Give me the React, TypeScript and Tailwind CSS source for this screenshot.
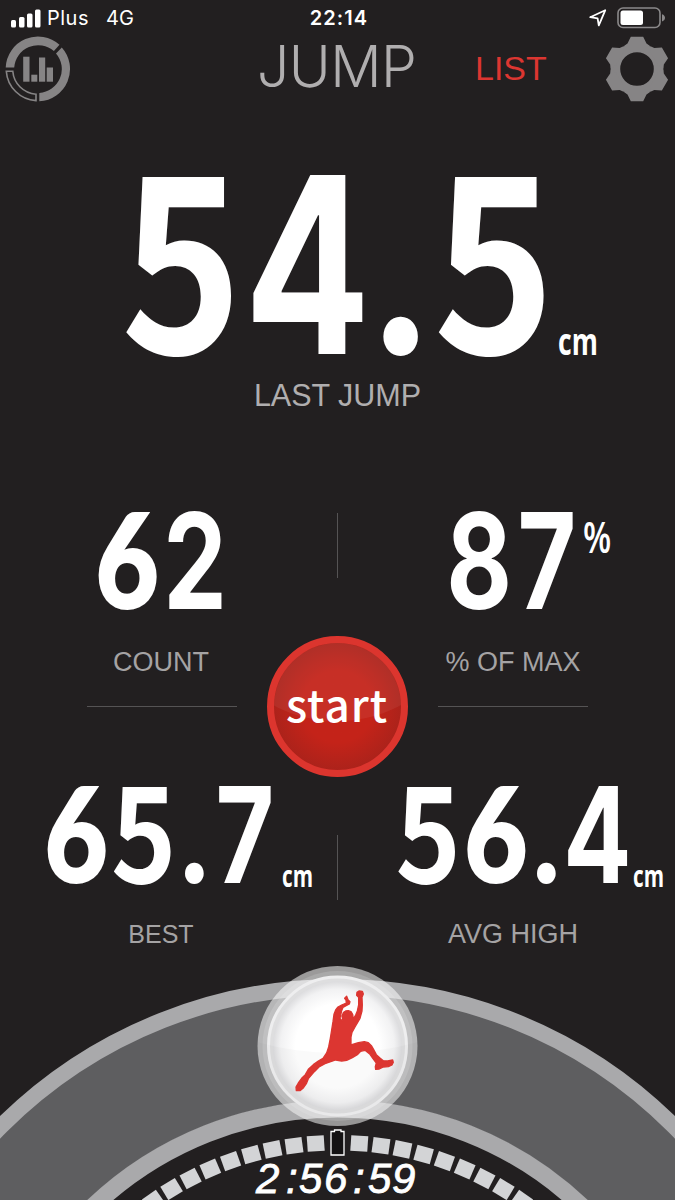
import type { ReactNode } from "react"

const TICKS = [1, 2, 3, 4, 5, 6, 7, 8, 9, 10]
const TEETH = [0, 60, 120, 180, 240, 300]

const StatusBar = () => (
    <div className="flex h-9 shrink-0 items-center font-['Inter',sans-serif] text-xl text-white">
        <div className="flex w-[300px] items-center pl-[11px]">
            <svg width="31" height="19" viewBox="0 0 31 19" fill="#fff">
                <rect x="0" y="11" width="5" height="7.5" rx="1.5" />
                <rect x="8" y="8" width="5.5" height="10.5" rx="1.5" />
                <rect x="16" y="4.5" width="5.5" height="14" rx="1.5" />
                <rect x="24" y="0.5" width="5.5" height="18" rx="1.5" />
            </svg>
            <span className="ml-[5px] tracking-[0.5px]">Plus</span>
            <span className="ml-[17px]">4G</span>
        </div>
        <span className="w-[78px] text-center font-semibold tracking-[1.1px]">22:14</span>
        <div className="flex flex-1 items-center justify-end pr-[9px]">
            <svg width="18" height="18" viewBox="0 0 18 18" fill="none" stroke="#fff" strokeWidth="1.8" strokeLinejoin="round">
                <path d="M1.2 8.2 16.2 1.3 9.8 16.4 8.6 9.3Z" />
            </svg>
            <svg className="ml-[10px]" width="49" height="22" viewBox="0 0 49 22">
                <rect x="1" y="1" width="42" height="19.5" rx="5" fill="none" stroke="#8b898a" strokeWidth="1.6" />
                <rect x="3.5" y="3.5" width="22.5" height="14.5" rx="2.5" fill="#fff" />
                <path d="M45 7.2q3 1 3 3.6t-3 3.6z" fill="#8b898a" />
            </svg>
        </div>
    </div>
)

const StatsIcon = () => (
    <svg width="66" height="66" viewBox="-33 -33 66 66" fill="#868485">
        <path d="M-32.3-1.5A32.3 32.3 0 0 1 21.5-24.2L15.9-17.9A24 24 0 0 0-23.8-1.5Z" />
        <path d="M23.8-21.6A32.3 32.3 0 0 1 1.3 32.2V24A24 24 0 0 0 18-15.6Z" />
        <path d="M-31.7 2.2A31.7 31.7 0 0 0-2 31.6V25.2A25 25 0 0 1-25.2 2.2Z" fill="none" stroke="#868485" strokeWidth="1.6" />
        <rect x="-14.8" y="-12.3" width="6.3" height="25" />
        <rect x="-6.7" y="5.7" width="6" height="7" />
        <rect x="1" y="-11.5" width="6.2" height="24.2" />
        <rect x="8.7" y="-1.5" width="6.3" height="14.2" />
    </svg>
)

const GearIcon = () => (
    <svg width="66" height="66" viewBox="-33 -33 66 66">
        <circle r="21.5" fill="none" stroke="#868485" strokeWidth="9.4" />
        {
            TEETH.map((angle) => (
                <path key={angle} transform={`rotate(${angle})`} d="M-6.2-32.3H6.2L9.5-25.5 13-23 7-20H-7L-13-23-9.5-25.5Z" fill="#868485" />
            ))
        }
    </svg>
)

// Every digit sits in a cell of the same width, some shapes come from another face
const DIGIT_STYLES: Record<string, string> = {
    "5": "w-[0.67em] scale-x-[1.1] font-['Noto_Sans_CJK_JP',sans-serif] font-bold",
    "6": "w-[0.67em] scale-x-[1.09] font-['Lato',sans-serif] font-extrabold",
    ".": "w-[0.33em] scale-x-[1.13] font-['Lato',sans-serif] font-black",
}

const Digits = ({ value, className }: { value: string; className: string }) => (
    <p className={`scale-x-[0.76] font-['Inter',sans-serif] font-bold whitespace-nowrap text-white ${className}`}>
        {
            value.split("").map((char, i) => (
                <span key={i} className={`inline-block text-center leading-[0] ${DIGIT_STYLES[char] ?? "w-[0.67em]"}`}>
                    {char}
                </span>
            ))
        }
    </p>
)

interface ReadingProps {
    value: string;
    label: string;
    labelClass?: string;
    children?: ReactNode
}

const Reading = ({ value, label, labelClass = "mt-4 text-[27px]", children }: ReadingProps) => (
    <div className="relative flex flex-col items-center">
        <Digits value={value} className="text-[133px] leading-[136px]" />
        {children}
        <p className={`leading-8 text-[#a5a3a4] ${labelClass}`}>{label}</p>
    </div>
)

const Unit = ({ className, children }: { className: string; children: ReactNode }) => (
    <span className={`absolute origin-left font-['Open_Sans',sans-serif] leading-none text-white ${className}`}>
        {children}
    </span>
)

const StartButton = () => (
    <button className="absolute top-[156px] left-[267px] size-[141px] overflow-hidden rounded-full border-[7px] border-[#dc352e] bg-radial from-[#c42319] from-40% to-[#96211b]">
        <span className="absolute -top-[60px] -left-[37px] h-[138px] w-[200px] rounded-[50%] bg-white/6" />
        <span className="relative block pr-px pb-2 font-['Noto_Sans_CJK_JP','Lato',sans-serif] text-[44px] leading-none font-medium tracking-[1px] text-white">start</span>
    </button>
)

const Gauge = () => (
    <svg className="shrink-0" width="675" height="240" viewBox="0 960 675 240">
        <defs>
            <radialGradient id="ball">
                <stop offset="0.65" stopColor="#fff" />
                <stop offset="0.88" stopColor="#f2f2f3" />
                <stop offset="1" stopColor="#dcdcde" />
            </radialGradient>
            <clipPath id="lens">
                <circle cx="337.5" cy="1046" r="80" />
            </clipPath>
        </defs>
        <g fill="none">
            <circle cx="337.5" cy="1463" r="416" stroke="#5e5e60" strokeWidth="107" />
            <circle cx="337.5" cy="1463" r="476" stroke="#a9a9ab" strokeWidth="16" />
            <circle cx="337.5" cy="1463" r="354.3" stroke="#a9a9ab" strokeWidth="17.5" />
        </g>
        {
            TICKS.map((tick) => (
                <g key={tick} fill="#d3d4d6">
                    <rect x="329" y="1135" width="17" height="15.5" transform={`rotate(${tick * 3.9} 337.5 1463)`} />
                    <rect x="329" y="1135" width="17" height="15.5" transform={`rotate(${-tick * 3.9} 337.5 1463)`} />
                </g>
            ))
        }
        <circle cx="337.5" cy="1046" r="80" fill="#fff" fillOpacity="0.55" />
        <circle cx="337.5" cy="1046" r="75" fill="#fff" fillOpacity="0.15" />
        <circle cx="337.5" cy="1046" r="69" fill="#dededf" stroke="#eeeeef" strokeWidth="3" />
        <circle cx="337.5" cy="1046" r="64.5" fill="url(#ball)" />
        <path d="M257 1042Q337 1064 418 1042V1127H257Z" fill="#000" fillOpacity="0.02" clipPath="url(#lens)" />
        <path
            transform="translate(245 955) scale(.3333)"
            fill="#dc3631"
            stroke="#dc3631"
            strokeWidth="4"
            strokeLinejoin="round"
            d="M336 112 342 108 352 109 355 117 351 127 352 150 351 168 345 190 330 216 321 232 318 246V270L340 263 358 260 370 263 380 273 386 284 394 299 405 309 415 317 428 318 443 315 445 322 441 330 430 335 415 336 403 342 392 343 391 335 394 324 384 311 375 298 360 286 347 289 337 299 322 308 305 316 290 318 272 315 255 321 240 326 222 336 208 350 190 371 184 386 174 400 165 407 154 407 153 396 160 384 170 370 181 359 190 343 205 329 220 318 234 310 245 294 251 276 256 250 260 225 264 200 267 178 272 165 279 156 290 150 304 144 303 135 299 130 305 124 309 134 315 140 313 147 302 153 294 157 290 167 285 190 291 198 293 192 291 184 295 173 302 168 310 167 318 170 323 178 325 192 332 180 337 168 341 150 341 127 335 121Z"
        />
        <path d="M334.5 1131.5V1130H341V1131.5H344V1155H331V1131.5Z" fill="#141213" stroke="#fff" strokeWidth="1.3" />
        <text
            x="256 286 299 324 353 368 392"
            y="1193"
            fontFamily="'Liberation Sans', Arial, sans-serif"
            fontSize="42"
            fontStyle="italic"
            fill="#fff"
            stroke="#fff"
            strokeWidth="0.8"
        >
            2:56:59
        </text>
    </svg>
)

const App = () => (
    <main className="flex h-[1200px] w-[675px] flex-col overflow-hidden bg-[#221f20] font-['Liberation_Sans',Arial,sans-serif]">
        <StatusBar />
        <header className="flex h-[68px] shrink-0 items-start">
            <div className="w-[257px] pl-[5px]"><StatsIcon /></div>
            <h1 className="w-[218px] font-['Inter',sans-serif] text-[57px] leading-[62px] font-light tracking-[-0.5px] text-[#b0aeaf]">JUMP</h1>
            <p className="w-[129px] text-[34px] leading-[64px] text-[#dc3631]">LIST</p>
            <GearIcon />
        </header>

        <section className="relative mt-[51px] flex shrink-0 flex-col items-center">
            <Digits value="54.5" className="text-[246px] leading-[220px]" />
            <Unit className="top-[167px] left-[558px] scale-x-[0.72] text-[37px] font-bold">cm</Unit>
            <p className="mt-[2px] text-[30.5px] leading-9 text-[#b0aeaf]">LAST JUMP</p>
        </section>

        <section className="relative mt-[67px] h-[480px] shrink-0">
            <div className="grid grid-cols-[322px_31px_320px]">
                <div className="pt-[13px]">
                    <Reading value="62" label="COUNT" labelClass="mt-[17px] text-[27px]" />
                </div>
                <div className="mt-[33px] h-[65px] w-px justify-self-center bg-[#555354]" />
                <div className="pt-[13px]">
                    <Reading value="87" label="% OF MAX" labelClass="mt-[17px] text-[27px]">
                        <Unit className="top-[22px] left-[230px] scale-x-[0.76] text-[43px] font-semibold">%</Unit>
                    </Reading>
                </div>
            </div>
            <div className="mt-[28px] flex justify-between px-[87px]">
                <div className="h-px w-[150px] bg-[#555354]" />
                <div className="h-px w-[150px] bg-[#555354]" />
            </div>
            <div className="mt-[60px] grid grid-cols-[322px_31px_320px]">
                <Reading value="65.7" label="BEST" labelClass="mt-[15px] text-[25px]">
                    <Unit className="top-[94px] left-[282px] scale-x-[0.69] text-[30px] font-bold">cm</Unit>
                </Reading>
                <div className="mt-[68px] h-[65px] w-px justify-self-center bg-[#555354]" />
                <Reading value="56.4" label="AVG HIGH" labelClass="mt-[15px] text-[27px]">
                    <Unit className="top-[94px] left-[280px] scale-x-[0.69] text-[30px] font-bold">cm</Unit>
                </Reading>
            </div>
            <StartButton />
        </section>

        <Gauge />
    </main>
)

export default App
